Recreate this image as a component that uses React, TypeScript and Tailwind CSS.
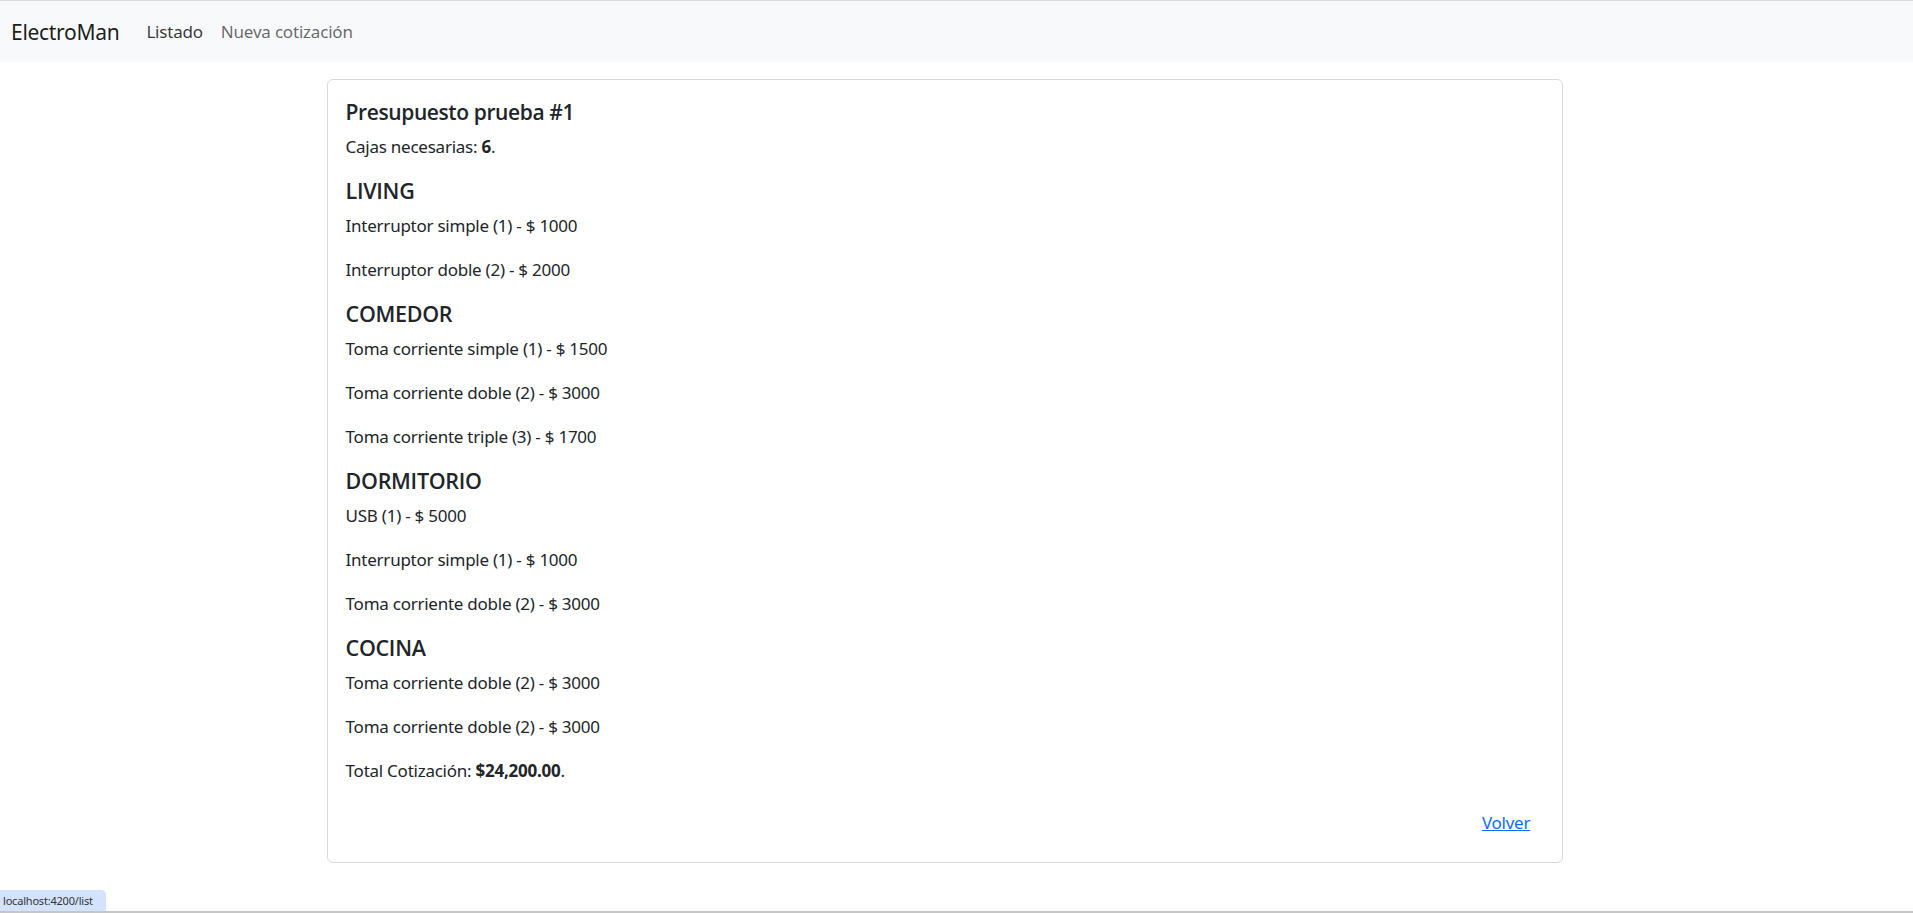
import React from "react";

type Item = { name: string; qty: number; price: number };
type Room = { name: string; items: Item[] };

const rooms: Room[] = [
  {
    name: "LIVING",
    items: [
      { name: "Interruptor simple", qty: 1, price: 1000 },
      { name: "Interruptor doble", qty: 2, price: 2000 },
    ],
  },
  {
    name: "COMEDOR",
    items: [
      { name: "Toma corriente simple", qty: 1, price: 1500 },
      { name: "Toma corriente doble", qty: 2, price: 3000 },
      { name: "Toma corriente triple", qty: 3, price: 1700 },
    ],
  },
  {
    name: "DORMITORIO",
    items: [
      { name: "USB", qty: 1, price: 5000 },
      { name: "Interruptor simple", qty: 1, price: 1000 },
      { name: "Toma corriente doble", qty: 2, price: 3000 },
    ],
  },
  {
    name: "COCINA",
    items: [
      { name: "Toma corriente doble", qty: 2, price: 3000 },
      { name: "Toma corriente doble", qty: 2, price: 3000 },
    ],
  },
];

const font = { fontFamily: '"Noto Sans", "Open Sans", sans-serif' };
const headingFont = { fontFamily: '"Open Sans", "Noto Sans", sans-serif' };

// texto del cuerpo, un poco angosto para parecerse a Segoe UI
const body = "mb-[17.6px] text-[17px] leading-[26.4px] tracking-[-0.25px]";

const App = () => {
  return (
    <div className="min-h-[913px] bg-white text-[#212529]" style={font}>
      <nav className="flex h-[62px] items-center border-t border-[#dcdcdc] bg-[#f8f9fa] px-[11px]">
        <a className="mr-[18px] text-[21px] leading-[30px] tracking-[-0.3px] text-black/90">ElectroMan</a>
        <a className="px-[9px] text-[17px] leading-[26px] tracking-[-0.2px] text-black/80">Listado</a>
        <a className="px-[9px] text-[17px] leading-[26px] tracking-[-0.2px] text-black/60">Nueva cotización</a>
      </nav>

      <section className="ml-[327px] mt-[17px] w-[1236px] rounded-[6px] border border-[#d9d9d9] px-[17.6px] pb-[17.6px] pt-[17.6px]">
        <h4 className="mb-[8px] text-[21px] font-semibold leading-[28px] tracking-[-0.4px]" style={headingFont}>
          Presupuesto prueba #1
        </h4>
        <p className={body}>
          Cajas necesarias: <b>6</b>.
        </p>

        {rooms.map((room, i) => (
          <div key={i}>
            <h5 className="mb-[8.8px] text-[21.5px] font-semibold leading-[26.4px] tracking-[-0.3px]" style={headingFont}>
              {room.name}
            </h5>
            {room.items.map((it, j) => (
              <p key={j} className={body}>
                {it.name} ({it.qty}) - $ {it.price}
              </p>
            ))}
          </div>
        ))}

        <p className={body}>
          Total Cotización: <b>$24,200.00</b>.
        </p>

        <div className="flex justify-end">
          <button className="border border-transparent px-[13.2px] py-[6.6px] text-[17px] leading-[26.4px] tracking-[-0.25px] text-[#0d6efd] underline">
            Volver
          </button>
        </div>
      </section>

      <div className="fixed bottom-[2px] left-0 w-[106px] whitespace-nowrap rounded-tr-[5px] bg-[#d3e3fd] px-[3px] py-[2px] text-[11px] leading-[17px] tracking-[-0.2px] text-[#333]">
        localhost:4200/list
      </div>
      <div className="fixed bottom-0 left-0 h-[2px] w-full bg-[#c6c6c6]" />
    </div>
  );
};

export default App;
